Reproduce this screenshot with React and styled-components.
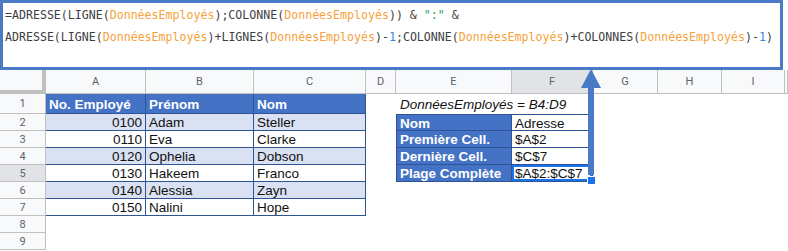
import styled, { createGlobalStyle, css } from "styled-components";

const GlobalStyle = createGlobalStyle`
  html, body {
    margin: 0;
    padding: 0;
    background: #ffffff;
  }
  * {
    box-sizing: border-box;
  }
`;

const BLUE = "#4472c4";
const BAND = "#d9e1f2";
const LINE = "#2f5496";
const GRID = "#c0c0c0";

const Page = styled.div`
  position: relative;
  width: 788px;
  height: 251px;
  overflow: hidden;
  background: #ffffff;
`;

const FormulaBar = styled.div`
  width: 783px;
  height: 70px;
  border: 3px solid #4a7ac6;
  padding: 1px 2px 0;
  font-family: "DejaVu Sans Mono", "Liberation Mono", monospace;
  font-size: 11.6px;
  line-height: 22px;
  color: #3c4043;
  white-space: pre;
`;

const Line = styled.div`
  display: block;
`;

const Ref = styled.span`
  color: #f6a13a;
`;

const Str = styled.span`
  color: #2ca05a;
`;

const Num = styled.span`
  color: #3f7fe0;
`;

const Sheet = styled.div`
  display: grid;
  grid-template-columns: 46px 100px 108px 112px 30px 116px 81px 65px 64px 63px 1fr;
  grid-template-rows: 24px 20px repeat(8, 17px);
  font-family: "Liberation Sans", Arial, sans-serif;
`;

const Corner = styled.div`
  background: #f8f9fa;
  border-right: 4px solid ${GRID};
  border-bottom: 4px solid ${GRID};
`;

const ColHead = styled.div`
  display: flex;
  align-items: center;
  justify-content: center;
  background: ${(p) => (p.$active ? "#e1e3e7" : "#f8f9fa")};
  border-right: 1px solid ${GRID};
  border-bottom: 1px solid ${GRID};
  font-family: Roboto, "Liberation Sans", sans-serif;
  font-size: 11px;
  color: #5f6368;
`;

const RowHead = styled.div`
  display: flex;
  align-items: center;
  justify-content: center;
  background: ${(p) => (p.$active ? "#e1e3e7" : "#f8f9fa")};
  border-right: 1px solid ${GRID};
  border-bottom: 1px solid ${GRID};
  font-family: Roboto, "Liberation Sans", sans-serif;
  font-size: 11px;
  color: #5f6368;
`;

const Cell = styled.div`
  position: relative;
  display: flex;
  align-items: center;
  padding: 1px 3px 0 3px;
  font-size: 13.5px;
  color: #111111;
  white-space: nowrap;
  justify-content: ${(p) => (p.$right ? "flex-end" : "flex-start")};
  background: #ffffff;

  ${(p) =>
    p.$kind === "head" &&
    css`
      background: ${BLUE};
      color: #ffffff;
      font-weight: bold;
      border-right: 1px solid ${LINE};
      border-bottom: 1px solid ${LINE};
    `}

  ${(p) =>
    p.$kind === "band" &&
    css`
      background: ${BAND};
      border-right: 1px solid ${LINE};
      border-bottom: 1px solid ${LINE};
    `}

  ${(p) =>
    p.$kind === "plain" &&
    css`
      border-right: 1px solid ${LINE};
      border-bottom: 1px solid ${LINE};
    `}

  ${(p) =>
    p.$first &&
    css`
      border-left: 1px solid ${LINE};
    `}

  ${(p) =>
    p.$top &&
    css`
      border-top: 1px solid ${LINE};
    `}

  ${(p) =>
    p.$selected &&
    css`
      box-shadow: inset 0 0 0 2px #1a73e8;
      &::after {
        content: "";
        position: absolute;
        right: -4px;
        bottom: -4px;
        width: 7px;
        height: 7px;
        background: #1a73e8;
        border: 1px solid #ffffff;
      }
    `}
`;

const Caption = styled.div`
  grid-column: span 2;
  display: flex;
  align-items: center;
  padding: 1px 0 0 4px;
  font-size: 13.5px;
  font-style: italic;
  color: #111111;
  white-space: nowrap;
`;

const Blank = styled.div`
  grid-column: ${(p) => p.$span || "auto"};
`;

const Arrow = styled.svg`
  position: absolute;
  left: 580px;
  top: 69px;
`;

const columns = ["A", "B", "C", "D", "E", "F", "G", "H", "I", ""];

const employees = [
  ["0100", "Adam", "Steller"],
  ["0110", "Eva", "Clarke"],
  ["0120", "Ophelia", "Dobson"],
  ["0130", "Hakeem", "Franco"],
  ["0140", "Alessia", "Zayn"],
  ["0150", "Nalini", "Hope"],
];

const lookup = [
  ["Nom", "Adresse"],
  ["Première Cell.", "$A$2"],
  ["Dernière Cell.", "$C$7"],
  ["Plage Complète", "$A$2:$C$7"],
];

const D = () => <Ref>DonnéesEmployés</Ref>;

export default function App() {
  return (
    <>
      <GlobalStyle />
      <Page>
        <FormulaBar>
          <Line>
            =ADRESSE(LIGNE(<D />);COLONNE(<D />)) &amp; <Str>":"</Str> &amp;
          </Line>
          <Line>
            ADRESSE(LIGNE(<D />)+LIGNES(<D />)-<Num>1</Num>;COLONNE(<D />)+COLONNES(<D />)-<Num>1</Num>)
          </Line>
        </FormulaBar>

        <Sheet>
          <Corner />
          {columns.map((c, i) => (
            <ColHead key={i} $active={c === "F"}>
              {c}
            </ColHead>
          ))}

          {/* row 1 */}
          <RowHead>1</RowHead>
          <Cell $kind="head">No. Employé</Cell>
          <Cell $kind="head">Prénom</Cell>
          <Cell $kind="head">Nom</Cell>
          <Blank />
          <Caption>DonnéesEmployés = B4:D9</Caption>
          <Blank $span="span 4" />

          {employees.map((e, i) => {
            const r = i + 2;
            const kind = i % 2 === 0 ? "band" : "plain";
            const look = lookup[i];
            return [
              <RowHead key={`h${r}`} $active={r === 5}>
                {r}
              </RowHead>,
              <Cell key={`a${r}`} $kind={kind} $right>
                {e[0]}
              </Cell>,
              <Cell key={`b${r}`} $kind={kind}>
                {e[1]}
              </Cell>,
              <Cell key={`c${r}`} $kind={kind}>
                {e[2]}
              </Cell>,
              <Blank key={`d${r}`} />,
              look ? (
                <Cell key={`e${r}`} $kind="head" $first $top={i === 0}>
                  {look[0]}
                </Cell>
              ) : (
                <Blank key={`e${r}`} />
              ),
              look ? (
                <Cell key={`f${r}`} $kind="plain" $top={i === 0} $selected={r === 5}>
                  {look[1]}
                </Cell>
              ) : (
                <Blank key={`f${r}`} />
              ),
              <Blank key={`g${r}`} $span="span 4" />,
            ];
          })}

          {[8, 9].map((r) => [
            <RowHead key={`h${r}`}>{r}</RowHead>,
            <Blank key={`x${r}`} $span="span 10" />,
          ])}
        </Sheet>

        <Arrow width="22" height="106" viewBox="0 0 22 106">
          <polygon points="11,0 1,19 21,19" fill="#4a7ac6" />
          <rect x="8" y="18" width="6" height="88" fill="#4a7ac6" />
        </Arrow>
      </Page>
    </>
  );
}
